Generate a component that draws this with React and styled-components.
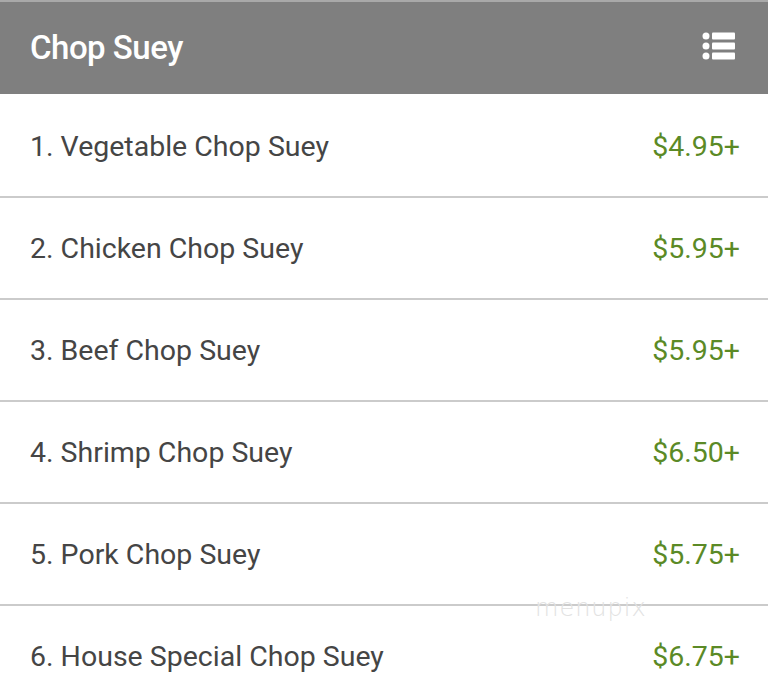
import React from 'react';
import styled, { createGlobalStyle } from 'styled-components';

const Global = createGlobalStyle`
  body {
    margin: 0;
    background: #fff;
    font-family: Roboto, "Noto Sans", sans-serif;
  }
`;

const Page = styled.div`
  position: relative;
  width: 768px;
  height: 696px;
  overflow: hidden;
  background: #fff;
`;

const Header = styled.div`
  box-sizing: border-box;
  height: 94px;
  margin-bottom: 2px;
  border-top: 2px solid #a9a9a9;
  background: #7f7f7f;
  display: flex;
  align-items: center;
  justify-content: space-between;
  padding: 0 31px 2px 30px;
`;

const Title = styled.h1`
  margin: 0;
  color: #fff;
  font-size: 33px;
  font-weight: 500;
  letter-spacing: -0.5px;
`;

const Row = styled.div`
  height: 100px;
  border-bottom: 2px solid #cbcbcb;
  display: flex;
  align-items: center;
  justify-content: space-between;
  padding: 0 28px 0 30px;
`;

const Name = styled.span`
  color: #454545;
  font-size: 28.5px;
`;

const Price = styled.span`
  color: #5b8a26;
  font-size: 28.5px;
`;

const Watermark = styled.div`
  position: absolute;
  left: 535px;
  top: 594px;
  color: #e2e2e2;
  font-family: "DejaVu Sans", sans-serif;
  font-size: 24px;
  font-weight: 200;
  letter-spacing: 1px;
`;

const ListIcon = () => (
  <svg width="36" height="32" viewBox="0 0 36 32" fill="#fff">
    <circle cx="5" cy="5" r="3.5" />
    <circle cx="5" cy="15" r="3.5" />
    <circle cx="5" cy="25" r="3.5" />
    <rect x="11" y="1.5" width="23" height="7" rx="1" />
    <rect x="11" y="11.5" width="23" height="7" rx="1" />
    <rect x="11" y="21.5" width="23" height="7" rx="1" />
  </svg>
);

const items = [
  ['1. Vegetable Chop Suey', '$4.95+'],
  ['2. Chicken Chop Suey', '$5.95+'],
  ['3. Beef Chop Suey', '$5.95+'],
  ['4. Shrimp Chop Suey', '$6.50+'],
  ['5. Pork Chop Suey', '$5.75+'],
  ['6. House Special Chop Suey', '$6.75+'],
];

export default function App() {
  return (
    <Page>
      <Global />
      <Header>
        <Title>Chop Suey</Title>
        <ListIcon />
      </Header>
      {items.map(([name, price]) => (
        <Row key={name}>
          <Name>{name}</Name>
          <Price>{price}</Price>
        </Row>
      ))}
      <Watermark>menupix</Watermark>
    </Page>
  );
}
